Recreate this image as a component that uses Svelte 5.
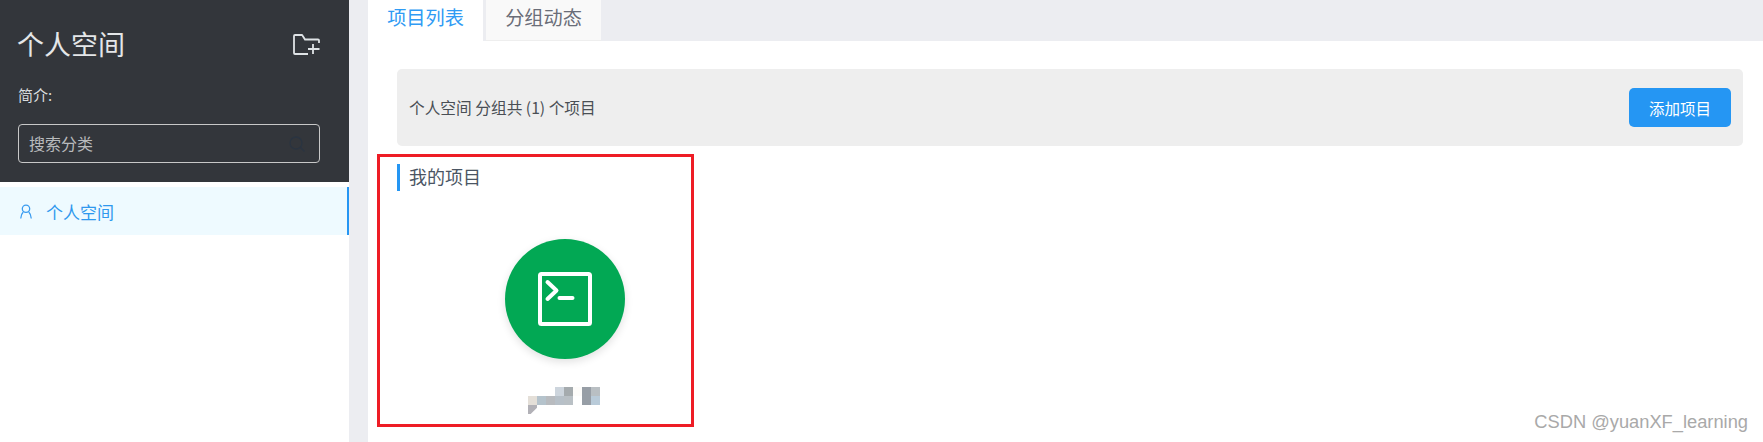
<script>
  const mosaic = [
    ['', '', '', '#cdd5dd', '#a5abae', '#fdfcfa', '#979ea6', '#b9bfc3'],
    ['#e4dfd8', '#b5c3cc', '#b8bbbf', '#b7c0c8', '#b9c0c5', '', '#979ea6', '#b9cbd9'],
    ['#b2b1b7', '', '', '', '', '', '', '']
  ];
</script>

<div class="page">
  <aside>
    <div class="head">
      <div class="title">
        <h1>个人空间</h1>
        <svg class="add" viewBox="0 0 27 21" fill="none" stroke="#dfe3e6" stroke-width="1.8">
          <path d="M26 9V6.500a1 1 0 0 0-1-1H12L9.500 1.500a1 1 0 0 0-.8-.5H2a1 1 0 0 0-1 1v17a1 1 0 0 0 1 1h13" />
          <path d="M20 10v10M15 15h11.500" />
        </svg>
      </div>
      <p class="intro">简介:</p>
      <div class="search">
        <span>搜索分类</span>
        <svg viewBox="0 0 16 16" fill="none" stroke="#2a3441" stroke-width="1.300">
          <circle cx="7" cy="7" r="6" />
          <path d="M11.500 11.500l4 4" />
        </svg>
      </div>
    </div>
    <div class="menu-item">
      <svg viewBox="0 0 13 16" fill="none" stroke="#3b9cf0" stroke-width="1.400">
        <circle cx="6.500" cy="5" r="4" />
        <path d="M3.500 8.500C2 10 1 12.500.8 15.500M9.500 8.500c1.500 1.500 2.500 4 2.700 7" />
      </svg>
      <span>个人空间</span>
    </div>
  </aside>

  <main>
    <nav>
      <div class="tab active">项目列表</div>
      <div class="tab">分组动态</div>
    </nav>

    <section class="bar">
      <span>个人空间 分组共 (1) 个项目</span>
      <button>添加项目</button>
    </section>

    <h2>我的项目</h2>

    <div class="project">
      <div class="circle">
        <svg viewBox="0 0 54 54" fill="none" stroke="#fff" stroke-linecap="round" stroke-linejoin="round">
          <rect x="2" y="2" width="50" height="50" rx="1.500" stroke-width="4" />
          <path d="M9.500 10l9 8.500-9 8.500" stroke-width="4" />
          <path d="M21.500 26h13" stroke-width="4" />
        </svg>
      </div>
      <div class="mosaic">
        {#each mosaic.flat() as c}
          <i style:background={c || 'transparent'}></i>
        {/each}
      </div>
    </div>
  </main>

  <div class="redbox"></div>
  <div class="watermark">CSDN @yuanXF_learning</div>
</div>

<style>
  :global(body) {
    margin: 0;
    background: #fff;
  }

  .page {
    position: relative;
    display: flex;
    height: 442px;
    overflow: hidden;
    background: #ecedf1;
    font-family: "Noto Sans CJK SC", "Noto Sans", sans-serif;
  }

  aside {
    width: 349px;
    flex-shrink: 0;
    background: #fff;
  }

  .head {
    box-sizing: border-box;
    height: 182px;
    padding: 0 29px 0 18px;
    background: #33363b;
    color: #d9dcde;
  }

  .title {
    display: flex;
    justify-content: space-between;
    align-items: center;
    height: 88px;
  }

  h1 {
    margin: -2px 0 0 -1px;
    font-size: 27px;
    font-weight: 400;
    color: #e4e6e8;
  }

  .add {
    width: 27px;
    height: 21px;
  }

  .intro {
    margin: 0;
    height: 36px;
    line-height: 14px;
    font-size: 15px;
  }

  .search {
    box-sizing: border-box;
    display: flex;
    justify-content: space-between;
    align-items: center;
    height: 39px;
    padding: 0 14px 0 10px;
    border: 1px solid #c8c8c8;
    border-radius: 4px;
    font-size: 16px;
    color: #b9bbbd;
  }

  .search span {
    margin-top: -1px;
  }

  .search svg {
    width: 16px;
    height: 16px;
  }

  .menu-item {
    box-sizing: border-box;
    display: flex;
    align-items: center;
    gap: 14px;
    height: 48px;
    margin-top: 5px;
    padding-left: 20px;
    border-right: 2px solid #2596f3;
    background: #eefaff;
    font-size: 17px;
    color: #2f98ee;
  }

  .menu-item svg {
    width: 12px;
    height: 15px;
  }

  main {
    flex: 1;
    margin-left: 19px;
    background: #fff;
  }

  nav {
    display: flex;
    gap: 3px;
    height: 41px;
    background: #ecedf1;
  }

  .tab {
    box-sizing: border-box;
    width: 115px;
    padding-bottom: 6px;
    display: flex;
    align-items: center;
    justify-content: center;
    background: #f9f9f9;
    border-bottom: 1px solid #eeeeee;
    font-size: 19.200px;
    color: #6a6d78;
  }

  .tab.active {
    background: #fff;
    border-bottom: 0;
    padding-bottom: 7px;
    color: #2f9bf4;
  }

  .bar {
    display: flex;
    justify-content: space-between;
    align-items: center;
    height: 77px;
    margin: 28px 20px 0 29px;
    padding: 0 12px 0 12px;
    border-radius: 5px;
    background: #eeeeee;
    font-size: 15.700px;
    color: #4a4f55;
  }

  button {
    width: 102px;
    height: 39px;
    padding: 0;
    border: 0;
    border-radius: 5px;
    background: #2596f3;
    color: #fff;
    font: inherit;
    font-size: 15.500px;
  }

  h2 {
    margin: 18px 0 0 29px;
    height: 27px;
    padding-left: 9px;
    border-left: 3px solid #2596f3;
    font-size: 18px;
    font-weight: 400;
    line-height: 25px;
    color: #4a5563;
  }

  .project {
    width: 320px;
    margin-left: 36px;
    display: flex;
    flex-direction: column;
    align-items: center;
  }

  .circle {
    display: flex;
    align-items: center;
    justify-content: center;
    width: 120px;
    height: 120px;
    margin-top: 48px;
    margin-left: 2px;
    border-radius: 50%;
    background: #02a854;
    box-shadow: 0 3px 8px rgba(0, 0, 0, 0.12);
  }

  .circle svg {
    width: 54px;
    height: 54px;
  }

  .mosaic {
    display: grid;
    grid-template-columns: repeat(8, 9px);
    grid-auto-rows: 9px;
    margin-top: 28px;
  }

  .mosaic i:nth-child(17) {
    clip-path: polygon(0 0, 100% 0, 100% 30%, 30% 100%, 0 100%);
  }

  .redbox {
    position: absolute;
    left: 377px;
    top: 154px;
    box-sizing: border-box;
    width: 317px;
    height: 273px;
    border: 3px solid #ee1c25;
  }

  .watermark {
    position: absolute;
    right: 15px;
    top: 411px;
    font-family: "Liberation Sans", sans-serif;
    font-size: 18.300px;
    color: #a9a9a9;
  }
</style>
